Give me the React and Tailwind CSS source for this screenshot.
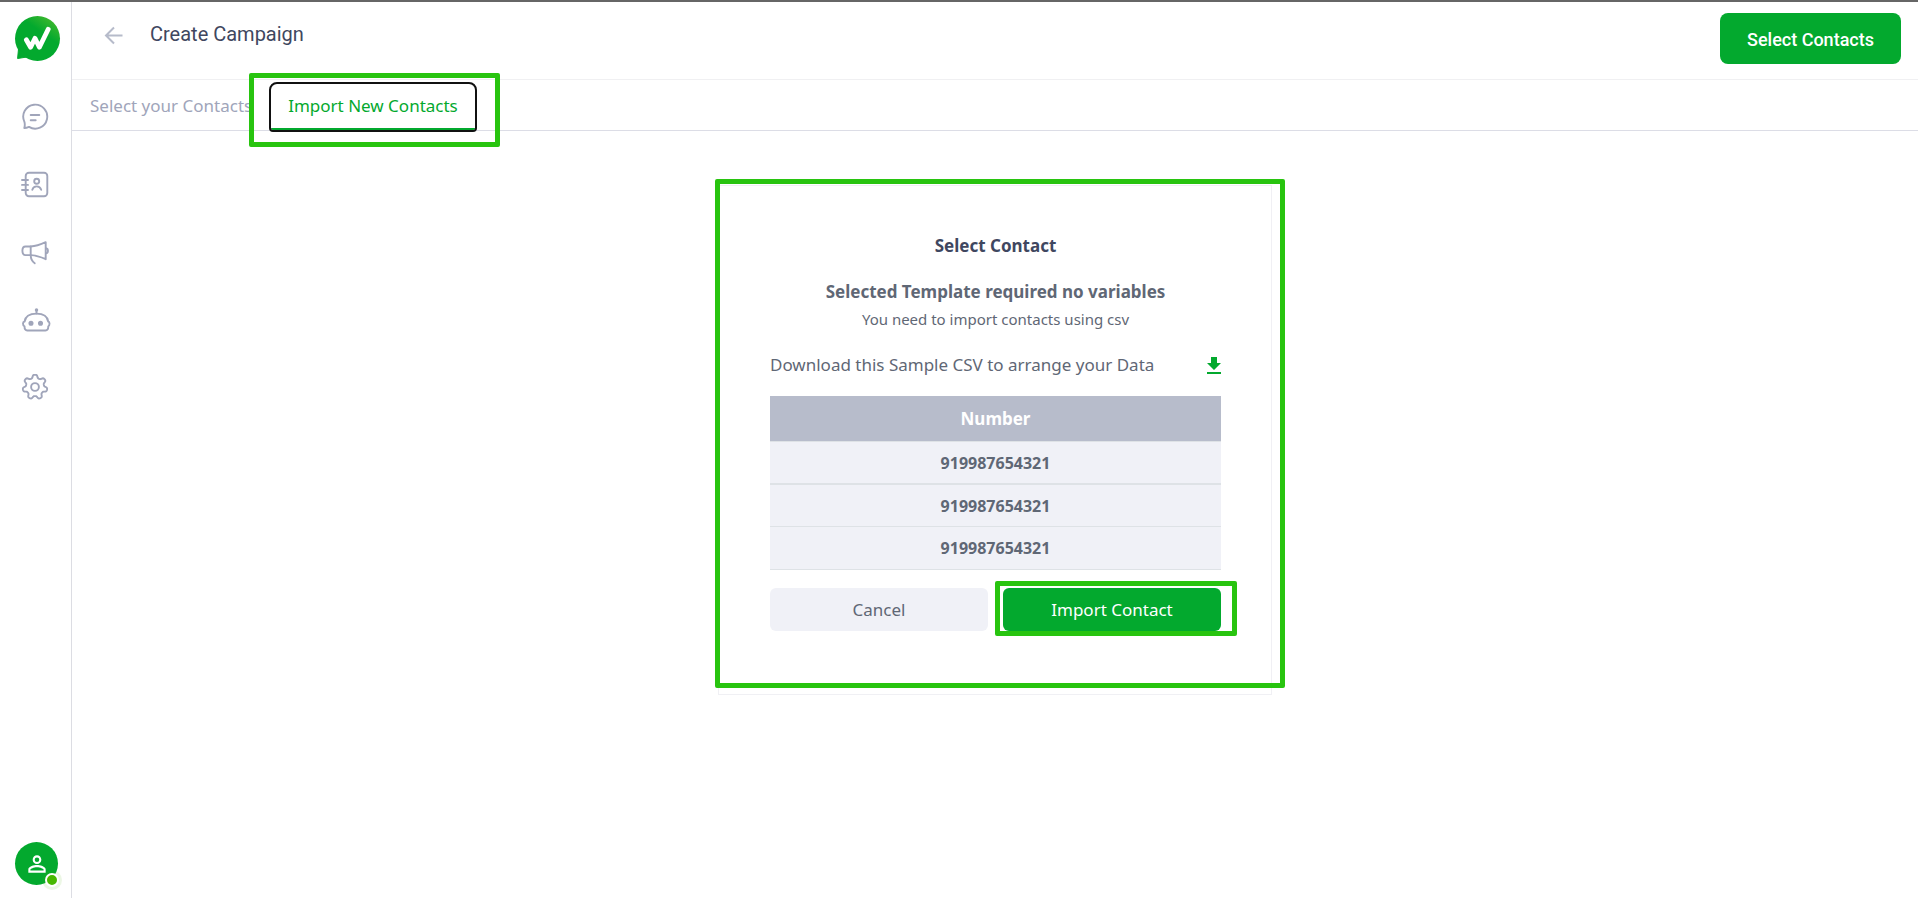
import React, { useState } from 'react';
import { MdPersonOutline } from 'react-icons/md';

const numbers = ['919987654321', '919987654321', '919987654321'];

// Outline of a cog with seven soft teeth
const gearPath = () => {
  const points = [];
  for (let i = 0; i < 140; i++) {
    const angle = (i / 140) * Math.PI * 2;
    const wave = Math.cos(angle * 7);
    const radius = 10.7 + 1.7 * Math.tanh(wave * 1.8);
    const x = 14 + radius * Math.sin(angle);
    const y = 13 - radius * Math.cos(angle);
    points.push(`${x.toFixed(2)} ${y.toFixed(2)}`);
  }
  return `M${points.join('L')}Z`;
};

const navItems = [
  {
    label: 'Chats',
    icon: (
      <>
        <path d="M3.4 19.8A12 12 0 1 1 8 24.9C6.8 25.4 5 26.1 3.3 26C3.9 24 4 22 3.4 19.8Z" />
        <path d="M9.7 13H18.3M9.7 18.3H14.7" />
      </>
    )
  },
  {
    label: 'Contacts',
    icon: (
      <>
        <rect x="4.7" y="2.8" width="21.6" height="23.4" rx="3.2" />
        <path d="M1 10H7M1 14.9H7M1 20H7" />
        <circle cx="15.7" cy="11.3" r="2.5" />
        <path d="M11.3 19.8C12 17.4 13.6 16.4 15.7 16.4S19.4 17.4 20.2 19.8" />
      </>
    )
  },
  {
    label: 'Campaigns',
    icon: (
      <>
        <path d="M24.7 4.2V21.2C20 19 15 17.3 9.7 17.1H4.5C2.5 17.1 1.4 15.5 1.4 12.8S2.5 8.5 4.5 8.5H9.7C15 8.3 20 6.4 24.7 4.2Z" />
        <path d="M9.7 8.5V17.1C9.7 21 11 23.6 13.7 25.2M24.9 10.2C27.6 10.6 27.6 15 24.9 15.4" />
      </>
    )
  },
  {
    label: 'Chatbot',
    icon: (
      <>
        <path d="M3.6 15.5C4.3 10.5 8.5 7.6 15.5 7.6S26.5 10.5 27.2 15.5C28.3 15.7 28.5 16.3 28.5 17.5S28.2 20 27.3 20.3C27.3 23 26.6 24.5 24.5 24.5H6.2C4.2 24.5 3.5 23 3.5 20.3C2.5 20 2 19 2 17.5S2.5 15.7 3.6 15.5Z" />
        <path d="M15.5 4V7.6" />
        <circle cx="15.5" cy="4" r="0.8" />
        <circle cx="10" cy="17.3" r="1.6" fill="currentColor" />
        <circle cx="19.5" cy="17.3" r="1.6" fill="currentColor" />
      </>
    )
  },
  {
    label: 'Settings',
    icon: (
      <>
        <path d={gearPath()} />
        <circle cx="14" cy="13" r="3.9" />
      </>
    )
  }
];

function Logo() {
  return (
    <svg width="46" height="46" viewBox="0 0 46 46" fill="none" aria-hidden="true">
      <defs>
        <linearGradient id="logo" x1="22" y1="22" x2="36" y2="2" gradientUnits="userSpaceOnUse">
          <stop offset="0.3" stopColor="#03a92e" />
          <stop offset="1" stopColor="#3fb82d" />
        </linearGradient>
      </defs>
      <circle cx="22.5" cy="22.5" r="22.5" fill="url(#logo)" />
      <path d="M3.5 33L2.6 42.5L15 40.5Z" fill="#03a92e" stroke="#03a92e" strokeLinejoin="round" />
      <path
        d="M11.3 23.8L15.6 31.2L20 22.3L24.4 31.2L33.2 13.3"
        stroke="#fff"
        strokeWidth="4.8"
        strokeLinecap="round"
        strokeLinejoin="round"
      />
    </svg>
  );
}

function Sidebar() {
  return (
    <aside className="flex w-[72px] shrink-0 flex-col border-r border-[#dcdde3] pt-3.5 pb-[13px] pl-[15px]">
      <a href="#" aria-label="Home">
        <Logo />
      </a>
      <nav className="mt-10 flex flex-col gap-[38px] pl-1.5">
        {navItems.map(item => (
          <a key={item.label} href="#" aria-label={item.label} className="text-[#a0a5ba]">
            <svg
              width="30"
              height="30"
              viewBox="0 0 30 30"
              fill="none"
              stroke="currentColor"
              strokeWidth="1.9"
              strokeLinecap="round"
              strokeLinejoin="round"
            >
              {item.icon}
            </svg>
          </a>
        ))}
      </nav>
      <button
        aria-label="Profile"
        className="relative mt-auto flex size-[43px] items-center justify-center rounded-full bg-[#03a92e] text-white"
      >
        <MdPersonOutline size={26} />
        <span className="absolute -right-1 -bottom-[5px] flex size-5 items-center justify-center rounded-full bg-[#47b800]/10">
          <span className="size-3.5 rounded-full border-2 border-white bg-[#47b800]" />
        </span>
      </button>
    </aside>
  );
}

// Bright box drawn around the part of the page being pointed out
function Highlight({ className }) {
  return <div className={`pointer-events-none absolute rounded-xs border-[5px] border-[#28c40f] ${className}`} />;
}

function Header() {
  return (
    <header className="flex h-[78px] items-start border-b border-[#f0f0f2] pr-[17px] pl-8">
      <button aria-label="Back" className="mt-6 text-[#b6bbca]">
        <svg width="20" height="20" viewBox="0 0 20 20" fill="none" stroke="currentColor" strokeWidth="2">
          <path d="M18.5 9.5H2M10 1.5L2 9.5L10 17.5" />
        </svg>
      </button>
      <h1 className="mt-[17px] ml-[26px] text-[20px] leading-[30px] text-[#3f4760]">Create Campaign</h1>
      <button className="mt-[11px] ml-auto h-[51px] w-[181px] rounded-lg bg-[#03a92e] pt-0.5 text-[18px] font-medium text-white">
        Select Contacts
      </button>
    </header>
  );
}

function ImportCard() {
  return (
    <section className="relative mx-auto mt-[54px] w-[554px] max-w-full border border-[#f0f0f4] pt-12 pr-[50px] pb-[63px] pl-[51px] text-center text-[#5f6775]">
      <h2 className="text-[17px] leading-6 font-bold text-[#3f4760]">Select Contact</h2>
      <h3 className="mt-[22px] text-[17px] leading-6 font-bold">Selected Template required no variables</h3>
      <p className="mt-[3px] text-[15px] leading-6">You need to import contacts using csv</p>
      <div className="mt-[22px] flex h-6 items-center justify-between">
        <p className="text-[17px] leading-6">Download this Sample CSV to arrange your Data</p>
        <button aria-label="Download sample CSV" className="text-[#03a92e]">
          <svg width="14" height="17" viewBox="5 3 14 17" fill="currentColor">
            <path d="M19 9h-4V3H9v6H5l7 7 7-7zM5 18v2h14v-2H5z" />
          </svg>
        </button>
      </div>
      <table className="mt-[19px] w-full border-separate border-spacing-0">
        <thead>
          <tr>
            <th className="h-[45px] bg-[#b7bccb] text-[17px] leading-6 font-bold text-white">Number</th>
          </tr>
        </thead>
        <tbody>
          {numbers.map((number, index) => (
            <tr key={index}>
              <td
                className={`h-[43px] border-b border-[#dee2e6] bg-[#f0f1f7] text-[16px] leading-5 font-bold ${
                  index < 2 ? 'border-t' : ''
                }`}
              >
                {number}
              </td>
            </tr>
          ))}
        </tbody>
      </table>
      <div className="mt-[18px] flex gap-[15px] text-[17px]">
        <button className="h-[43px] flex-1 rounded-md bg-[#f0f1f7]">Cancel</button>
        <div className="relative flex-1">
          <button className="h-[43px] w-full rounded-md bg-[#03a92e] text-white">Import Contact</button>
          <Highlight className="-top-[7px] -right-4 -bottom-[5px] -left-2" />
        </div>
      </div>
      <Highlight className="-top-[7px] -right-3.5 bottom-1.5 -left-1" />
    </section>
  );
}

function App() {
  const [tab, setTab] = useState('import');

  const tabs = [
    { id: 'select', label: 'Select your Contacts' },
    { id: 'import', label: 'Import New Contacts' }
  ];

  return (
    <div className="flex min-h-screen flex-col border-t-2 border-[#666] bg-white font-[Roboto,sans-serif]">
      <div className="flex grow">
        <Sidebar />
        <div className="min-w-0 flex-1">
          <Header />
          <div className="font-['Noto_Sans',sans-serif]">
            <nav className="flex h-[51px] items-end gap-0.5 border-b border-[#dcdde6] pl-px text-[17px]">
              {tabs.map(item => (
                <div key={item.id} className="relative">
                  <button
                    onClick={() => setTab(item.id)}
                    className={`block h-[46px] rounded-t-md rounded-b-xs border-b-2 px-[17px] ${
                      tab === item.id
                        ? 'border-[#03a92e] text-[#03a92e] outline-2 outline-[#111]'
                        : 'border-transparent text-[#a0a5ba]'
                    }`}
                  >
                    {item.label}
                  </button>
                  {tab === item.id && <Highlight className="-top-[11px] -right-[25px] -bottom-[17px] -left-[22px]" />}
                </div>
              ))}
            </nav>
            {tab === 'import' && <ImportCard />}
          </div>
        </div>
      </div>
    </div>
  );
}

export default App;
